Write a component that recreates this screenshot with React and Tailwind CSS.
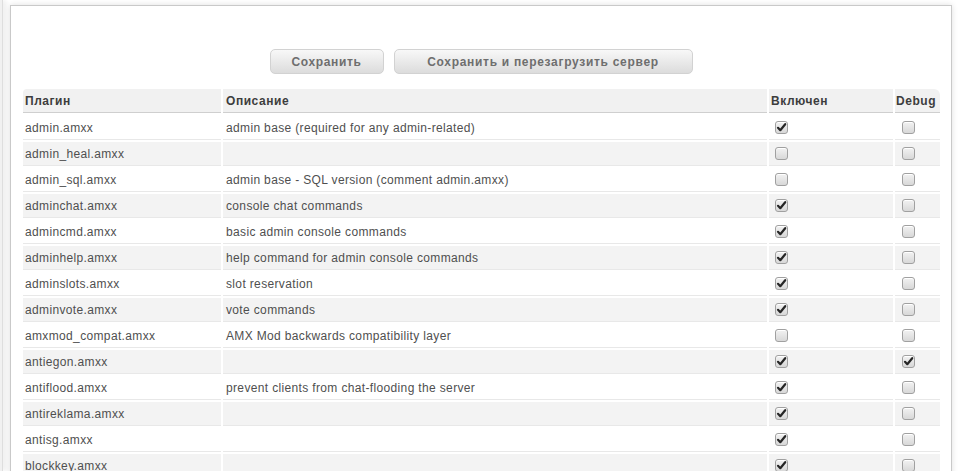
import React from "react";

const plugins = [
  ["admin.amxx", "admin base (required for any admin-related)", true, false],
  ["admin_heal.amxx", "", false, false],
  ["admin_sql.amxx", "admin base - SQL version (comment admin.amxx)", false, false],
  ["adminchat.amxx", "console chat commands", true, false],
  ["admincmd.amxx", "basic admin console commands", true, false],
  ["adminhelp.amxx", "help command for admin console commands", true, false],
  ["adminslots.amxx", "slot reservation", true, false],
  ["adminvote.amxx", "vote commands", true, false],
  ["amxmod_compat.amxx", "AMX Mod backwards compatibility layer", false, false],
  ["antiegon.amxx", "", true, true],
  ["antiflood.amxx", "prevent clients from chat-flooding the server", true, false],
  ["antireklama.amxx", "", true, false],
  ["antisg.amxx", "", true, false],
  ["blockkey.amxx", "", true, false],
];

function Check({ on }) {
  return (
    <span className="inline-flex w-[13px] h-[13px] rounded-[3px] border border-[#a0a0a0] bg-linear-to-b from-[#f2f2f2] to-[#d8d8d8] items-center justify-center shadow-[inset_0_1px_0_#fff]">
      {on && (
        <svg width="11" height="11" viewBox="0 0 11 11">
          <path d="M2 5.8 L4.3 8.2 L9.2 2.2" fill="none" stroke="#262626" strokeWidth="2.2" strokeLinecap="round" strokeLinejoin="round" />
        </svg>
      )}
    </span>
  );
}

const cols = "grid grid-cols-[198px_544px_124px_45px] gap-x-[2px]";

export default function App() {
  return (
    <div className="flex w-[970px] h-[471px] overflow-hidden bg-white font-['Liberation_Sans',Arial,sans-serif] text-[12px]">
      <div className="w-[3px] shrink-0 bg-[#f1f1f1] border-r border-[#dedede] shadow-[2px_0_5px_rgba(0,0,0,0.12)]" />
      <div className="ml-[7px] mt-[5px] w-[942px] shrink-0 h-[600px] border border-[#c9c9c9] bg-white shadow-[0_0_6px_rgba(0,0,0,0.13)] px-[12px]">
        <div className="flex justify-center gap-[10px] pt-[43px]">
          <button className="w-[114px] h-[25px] rounded-[5px] border border-[#d2d2d2] bg-linear-to-b from-[#f8f8f8] to-[#dcdcdc] text-[#6e6e6e] font-bold tracking-[0.65px] text-[12px]">
            Сохранить
          </button>
          <button className="w-[299px] h-[25px] rounded-[5px] border border-[#d2d2d2] bg-linear-to-b from-[#f8f8f8] to-[#dcdcdc] text-[#6e6e6e] font-bold tracking-[0.7px] text-[12px]">
            Сохранить и перезагрузить сервер
          </button>
        </div>

        <div className="mt-[15px]">
          <div className={cols + " font-bold text-[#3d3d3d] tracking-[0.55px]"}>
            <div className="h-[24px] flex items-center pl-[2px] bg-[#f1f1f1] border-b border-[#cfcfcf] rounded-tl-[4px]">Плагин</div>
            <div className="h-[24px] flex items-center pl-[3px] bg-[#f1f1f1] border-b border-[#cfcfcf]">Описание</div>
            <div className="h-[24px] flex items-center pl-[2px] bg-[#f1f1f1] border-b border-[#cfcfcf]">Включен</div>
            <div className="h-[24px] flex items-center pl-[1px] bg-[#f1f1f1] border-b border-[#cfcfcf] rounded-tr-[6px]">Debug</div>
          </div>
          <div className="flex flex-col gap-y-[2px] mt-[3px] text-[#4f4f4f] tracking-[0.35px]">
            {plugins.map(([name, desc, enabled, debug], i) => {
              const bg = i % 2 === 1 ? "bg-[#f3f3f3]" : "bg-white";
              const cell = "h-[24px] flex items-center border-b border-[#e8e8e8] " + bg;
              return (
                <div key={name} className={cols}>
                  <div className={cell + " pl-[2px]"}>{name}</div>
                  <div className={cell + " pl-[3px]"}>{desc}</div>
                  <div className={cell + " pl-[6px]"}><Check on={enabled} /></div>
                  <div className={cell + " pl-[7px]"}><Check on={debug} /></div>
                </div>
              );
            })}
          </div>
        </div>
      </div>
    </div>
  );
}
